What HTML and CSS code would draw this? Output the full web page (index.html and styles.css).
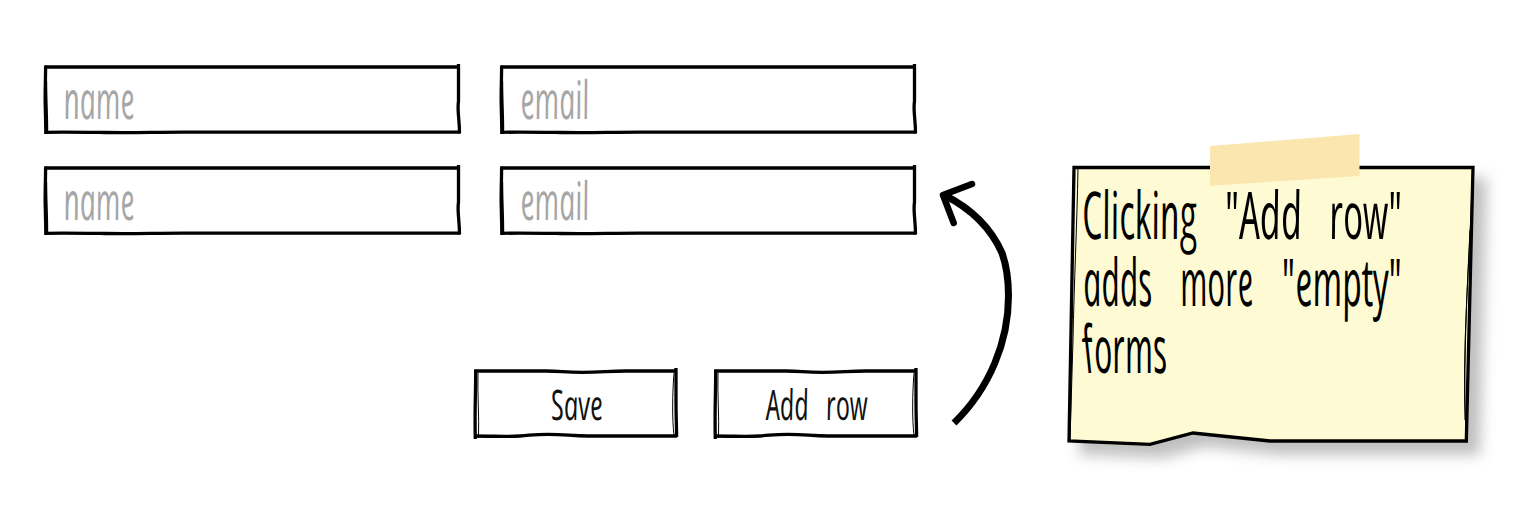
FILE: index.html
```html
<!DOCTYPE html>
<html lang="en">
<head>
<meta charset="utf-8">
<title>Add row</title>
<link rel="stylesheet" href="styles.css">
</head>
<body>
<svg class="defs" aria-hidden="true">
  <symbol id="field-frame" viewBox="0 0 420 72">
    <path class="line" d="M2 4H416"/>
    <path class="line" d="M2.6 2.5C2.6 18 1.8 30 2.3 44C2.5 55 2.8 62 2.8 71"/>
    <path class="line thin" d="M3.2 18C3.2 38 4.4 52 4.2 70.5"/>
    <path class="line" d="M2 69.3C24 69 44 69.3 62 69.5C90 70 110 69.2 140 69.2H417"/>
    <path class="line" d="M415.5 1V38C414 48 416.5 55 416.5 70.5"/>
  </symbol>
  <symbol id="button-frame" viewBox="0 0 210 76">
    <path class="line" d="M4 6H76C91 6 94 7.3 112 7.3C132 7.3 138 6 156 6H207"/>
    <path class="line" d="M5.7 5C5.7 28 4.6 46 5.3 74"/>
    <path class="line hair" d="M8 8C7.3 30 9.3 50 8.5 73"/>
    <path class="line" d="M4 71C24 71 35 72 50 71C63 70 65 69.3 78 69.3C96 69.3 101 71 118 71H207"/>
    <path class="line" d="M206 3V38C206 52 206.6 60 206.6 72"/>
    <path class="line hair" d="M204 8C202.4 29 202 54 204 70"/>
  </symbol>
</svg>
<main class="board">
  <section class="form">
    <div class="fields">
      <svg class="field" viewBox="0 0 420 72"><use href="#field-frame"/><text class="placeholder" transform="translate(22 56) skewX(6)" textLength="71" lengthAdjust="spacingAndGlyphs">name</text></svg>
      <svg class="field" viewBox="0 0 420 72"><use href="#field-frame"/><text class="placeholder" transform="translate(23 56) skewX(6)" textLength="69" lengthAdjust="spacingAndGlyphs">email</text></svg>
      <svg class="field" viewBox="0 0 420 72"><use href="#field-frame"/><text class="placeholder" transform="translate(22 56) skewX(6)" textLength="71" lengthAdjust="spacingAndGlyphs">name</text></svg>
      <svg class="field" viewBox="0 0 420 72"><use href="#field-frame"/><text class="placeholder" transform="translate(23 56) skewX(6)" textLength="69" lengthAdjust="spacingAndGlyphs">email</text></svg>
    </div>
    <div class="actions">
      <svg class="button" viewBox="0 0 210 76"><use href="#button-frame"/><text class="label" transform="translate(82 55) skewX(6)" textLength="52" lengthAdjust="spacingAndGlyphs">Save</text></svg>
      <svg class="button" viewBox="0 0 210 76"><use href="#button-frame"/><text class="label" transform="translate(57 55) skewX(6)" textLength="43" lengthAdjust="spacingAndGlyphs">Add</text><text class="label" transform="translate(117 55) skewX(6)" textLength="42" lengthAdjust="spacingAndGlyphs">row</text></svg>
    </div>
  </section>
  <svg class="arrow" viewBox="930 170 90 260">
    <path class="shaft" d="M954 423C990 388 1008.5 341 1008.5 296C1008.5 281 1006 264 1002 253C991 228 970 208 944 195"/>
    <path class="head" d="M972 184L943 195L953.7 223"/>
  </svg>
  <svg class="note" viewBox="1060 125 440 355">
    <path class="paper" d="M1074 167.5H1473L1466.3 441H1270L1193 433L1150 444.3L1069 441Z"/>
    <path class="line hair" d="M1078 168C1077 225 1074 285 1073 340L1070 440M1472 185C1470 260 1461 355 1466 430M1470 230C1467 290 1464 350 1465 420"/>
    <path class="tape" d="M1210 146L1359.5 134V176L1210 185.7Z"/>
    <g class="message">
      <text transform="translate(1084 239) skewX(6)" textLength="115" lengthAdjust="spacingAndGlyphs">Clicking</text>
      <text transform="translate(1227 239) skewX(6)" textLength="77" lengthAdjust="spacingAndGlyphs">"Add</text>
      <text transform="translate(1331 239) skewX(6)" textLength="73" lengthAdjust="spacingAndGlyphs">row"</text>
      <text transform="translate(1085 306) skewX(6)" textLength="69" lengthAdjust="spacingAndGlyphs">adds</text>
      <text transform="translate(1182 306) skewX(6)" textLength="73" lengthAdjust="spacingAndGlyphs">more</text>
      <text transform="translate(1284 306) skewX(6)" textLength="120" lengthAdjust="spacingAndGlyphs">"empty"</text>
      <text transform="translate(1085 373) skewX(6)" textLength="84" lengthAdjust="spacingAndGlyphs"><tspan class="upright">f</tspan>orms</text>
    </g>
  </svg>
</main>
</body>
</html>
```
FILE: styles.css
```css
body {
  margin: 0;
  background: #fff;
}

svg {
  display: block;
  flex: none;
  overflow: visible;
}

.defs {
  width: 0;
  height: 0;
}

.board {
  display: flex;
  align-items: flex-start;
  box-sizing: border-box;
  width: 1532px;
  height: 520px;
  padding-left: 43px;
  overflow: hidden;
}

.form {
  width: 877px;
  padding-top: 63px;
}

.fields {
  display: grid;
  grid-template-columns: 420px 420px;
  gap: 29px 36px;
}

.field {
  width: 420px;
  height: 72px;
}

.actions {
  display: flex;
  justify-content: flex-end;
  gap: 30px;
  margin-top: 129px;
}

.button {
  width: 210px;
  height: 76px;
}

.arrow {
  width: 90px;
  height: 260px;
  margin: 170px 0 0 10px;
}

.note {
  width: 440px;
  height: 355px;
  margin: 125px 0 0 40px;
}

.line {
  fill: none;
  stroke: #000;
  stroke-width: 3.3;
}

.thin {
  stroke-width: 2;
}

.hair {
  stroke-width: 1;
}

.shaft {
  fill: none;
  stroke: #000;
  stroke-width: 7;
}

.head {
  fill: none;
  stroke: #000;
  stroke-width: 6.5;
  stroke-linecap: round;
  stroke-linejoin: round;
}

text {
  font-family: "Open Sans", "Noto Sans", sans-serif;
  font-style: italic;
  font-weight: 400;
}

.placeholder {
  font-size: 53px;
  fill: #a6a6a6;
}

.label {
  font-size: 42px;
  fill: #111;
}

.upright {
  font-style: normal;
}

.paper {
  fill: #fefad3;
  stroke: #000;
  stroke-width: 3.3;
  filter: drop-shadow(12px 12px 7px rgba(0, 0, 0, 0.25));
}

.tape {
  fill: #fbe6b0;
}

.message {
  font-size: 66px;
  fill: #000;
}
```
